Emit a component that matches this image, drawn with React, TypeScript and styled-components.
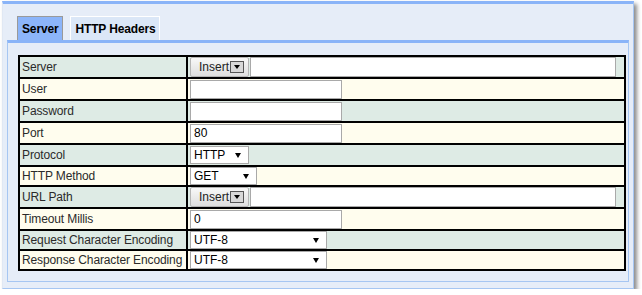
import styled, { createGlobalStyle } from 'styled-components';

type FieldKind = 'text' | 'insert' | 'select';

type FieldType = {
  label: string;
  kind: FieldKind;
  value?: string;
  selectWidth?: number;
  compact?: boolean;
};

const fields: FieldType[] = [
  { label: 'Server', kind: 'insert' },
  { label: 'User', kind: 'text' },
  { label: 'Password', kind: 'text' },
  { label: 'Port', kind: 'text', value: '80' },
  { label: 'Protocol', kind: 'select', value: 'HTTP', selectWidth: 59 },
  { label: 'HTTP Method', kind: 'select', value: 'GET', selectWidth: 67, compact: true },
  { label: 'URL Path', kind: 'insert' },
  { label: 'Timeout Millis', kind: 'text', value: '0' },
  { label: 'Request Character Encoding', kind: 'select', value: 'UTF-8', selectWidth: 137, compact: true },
  { label: 'Response Character Encoding', kind: 'select', value: 'UTF-8', selectWidth: 137, compact: true },
];

const GlobalStyle = createGlobalStyle`
  body {
    margin: 0;
    background: #ffffff;
    font-family: 'Liberation Sans', Arial, sans-serif;
    font-size: 12px;
  }
`;

const StyledFrame = styled.div`
  box-sizing: border-box;
  margin: 1px 0 0 2px;
  width: 632px;
  height: 288px;
  background: #e6edf8;
  border-top: 3px solid #8ab4f8;
  border-right: 1px solid #a6c6f2;
  border-bottom: 1px solid #a6c6f2;
  border-left: 1px solid #e0e8f4;
  box-shadow: 3px 3px 4px rgba(0, 0, 0, 0.45);
`;

const StyledTabBar = styled.div`
  display: flex;
  gap: 7px;
  padding: 12px 0 0 14px;
`;

const StyledTab = styled.div<{ active?: boolean }>`
  box-sizing: border-box;
  height: 24px;
  display: flex;
  align-items: center;
  padding: 0 4px;
  font-weight: bold;
  letter-spacing: -0.15px;
  color: #000;
  background: ${({ active }) => (active ? '#8cb5fa' : '#dbe7f7')};
  border: 1px solid ${({ active }) => (active ? '#9a9a9a' : '#ffffff')};
  border-bottom: none;
`;

const StyledPanel = styled.div`
  box-sizing: border-box;
  margin-left: 4px;
  width: 622px;
  height: 242px;
  padding: 12px 0 0 10px;
  border-top: 3px solid #8ab4f8;
  border-left: 1px solid #a6c6f2;
  border-right: 1px solid #a6c6f2;
  border-bottom: 1px solid #a6c6f2;
`;

const StyledGrid = styled.div`
  display: grid;
  grid-template-columns: 166px 436px;
  gap: 2px;
  padding: 2px;
  width: 608px;
  box-sizing: border-box;
  background: #000;
`;

const StyledCell = styled.div<{ shade: boolean; compact?: boolean }>`
  display: flex;
  align-items: center;
  height: ${({ compact }) => (compact ? 18 : 20)}px;
  padding-left: 2px;
  background: ${({ shade }) => (shade ? '#deebe5' : '#fffdee')};
`;

const StyledLabel = styled.span`
  color: #2a2a2a;
  letter-spacing: -0.12px;
`;

const StyledInput = styled.input<{ wide?: boolean }>`
  box-sizing: border-box;
  width: ${({ wide }) => (wide ? '366px' : '152px')};
  height: ${({ wide }) => (wide ? '20px' : '19px')};
  margin: 0;
  padding: 0 3px;
  border: 1px solid #a9a9a9;
  background: #fff;
  font-family: 'Liberation Sans', Arial, sans-serif;
  font-size: 12px;
  color: #000;
  outline: none;
`;

const StyledInsertRow = styled.div`
  display: flex;
  align-items: center;
  gap: 1px;
`;

const StyledInsertButton = styled.div`
  box-sizing: border-box;
  display: flex;
  align-items: center;
  gap: 1px;
  width: 59px;
  height: 20px;
  padding-left: 8px;
  border: 1px solid #b4b4b4;
  border-radius: 2px;
  background: linear-gradient(#f8f8f8, #dedede);
  color: #222;
`;

const StyledDropIcon = styled.span`
  box-sizing: border-box;
  display: flex;
  align-items: center;
  justify-content: center;
  width: 14px;
  height: 12px;
  border: 1px solid #555;
  background: #d8d8d8;

  &::after {
    content: '';
    border-left: 3px solid transparent;
    border-right: 3px solid transparent;
    border-top: 4px solid #000;
  }
`;

const StyledSelect = styled.div<{ width: number }>`
  box-sizing: border-box;
  position: relative;
  display: flex;
  align-items: center;
  width: ${({ width }) => width}px;
  height: 18px;
  padding-left: 3px;
  border: 1px solid #a9a9a9;
  background: #fff;
  color: #000;

  &::after {
    content: '';
    position: absolute;
    right: 7px;
    top: 6px;
    border-left: 3px solid transparent;
    border-right: 3px solid transparent;
    border-top: 5px solid #000;
  }
`;

const renderValue = (field: FieldType) => {
  switch (field.kind) {
    case 'insert':
      return (
        <StyledInsertRow>
          <StyledInsertButton>
            Insert
            <StyledDropIcon />
          </StyledInsertButton>
          <StyledInput wide defaultValue="" />
        </StyledInsertRow>
      );
    case 'select':
      return (
        <StyledSelect width={field.selectWidth ?? 60}>{field.value}</StyledSelect>
      );
    default:
      return <StyledInput defaultValue={field.value ?? ''} />;
  }
};

export default function App() {
  return (
    <>
      <GlobalStyle />
      <StyledFrame>
        <StyledTabBar>
          <StyledTab active>Server</StyledTab>
          <StyledTab>HTTP Headers</StyledTab>
        </StyledTabBar>
        <StyledPanel>
          <StyledGrid>
            {fields.map((field, index) => {
              const shade = index % 2 === 0;
              return [
                <StyledCell key={`l${index}`} shade={shade} compact={field.compact}>
                  <StyledLabel>{field.label}</StyledLabel>
                </StyledCell>,
                <StyledCell key={`v${index}`} shade={shade} compact={field.compact}>
                  {renderValue(field)}
                </StyledCell>,
              ];
            })}
          </StyledGrid>
        </StyledPanel>
      </StyledFrame>
    </>
  );
}
